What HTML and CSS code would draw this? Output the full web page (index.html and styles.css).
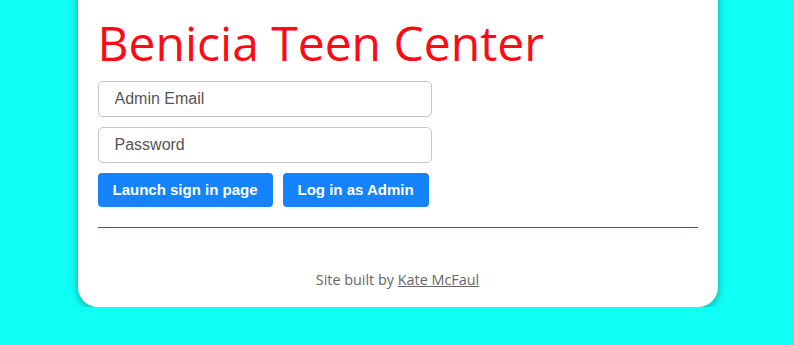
FILE: index.html
```html
<!DOCTYPE html>
<html>
<head>
    <meta charset="UTF-8">
    <title>Benicia Teen Center</title>
    <link rel="stylesheet" href="styles.css">
</head>
<body>
    <div class="card">
        <h1 class="title">Benicia Teen Center</h1>
        <form class="login-form" onsubmit="return false">
            <input class="field" type="email" placeholder="Admin Email">
            <input class="field" type="password" placeholder="Password">
            <div class="button-group">
                <button class="button" type="button">Launch sign in page</button>
                <button class="button" type="submit">Log in as Admin</button>
            </div>
        </form>
        <hr class="divider">
        <footer class="footer">
            Site built by <a href="#">Kate McFaul</a>
        </footer>
    </div>
</body>
</html>
```

FILE: styles.css
```css
body {
    margin: 0;
    padding-left: 1px;
    background-color: #0ffff7;
    font-family: "Open Sans", sans-serif;
}

.card {
    width: 640px;
    box-sizing: border-box;
    margin: -20px auto 0;
    padding: 34px 20px 18px;
    background-color: white;
    border-radius: 20px;
    box-shadow: 0 2px 8px rgba(0, 0, 0, 0.35);
}

.title {
    margin: 0 0 9px;
    font-size: 48px;
    font-weight: 400;
    line-height: 1.2;
    color: #ff0a14;
}

.login-form {
    display: flex;
    flex-direction: column;
    gap: 10px;
}

.field {
    width: 334px;
    height: 36px;
    box-sizing: border-box;
    padding: 0 16px;
    border: 1px solid #c6c6c6;
    border-radius: 5px;
    font-family: "Liberation Sans", Arial, sans-serif;
    font-size: 16px;
    color: #333;
}

.field::placeholder {
    color: #555;
}

.button-group {
    display: flex;
    gap: 10px;
}

.button {
    height: 34px;
    padding: 0 15px;
    border: none;
    border-radius: 4px;
    background-color: #1483fc;
    color: white;
    font-family: "Liberation Sans", Arial, sans-serif;
    font-size: 15px;
    font-weight: bold;
    cursor: pointer;
}

.divider {
    margin: 20px 0 0;
    border: none;
    border-top: 1px solid #e8121c;
}

.footer {
    margin-top: 42px;
    text-align: center;
    font-size: 14.4px;
    color: #666;
}

.footer a {
    color: #666;
}
```
